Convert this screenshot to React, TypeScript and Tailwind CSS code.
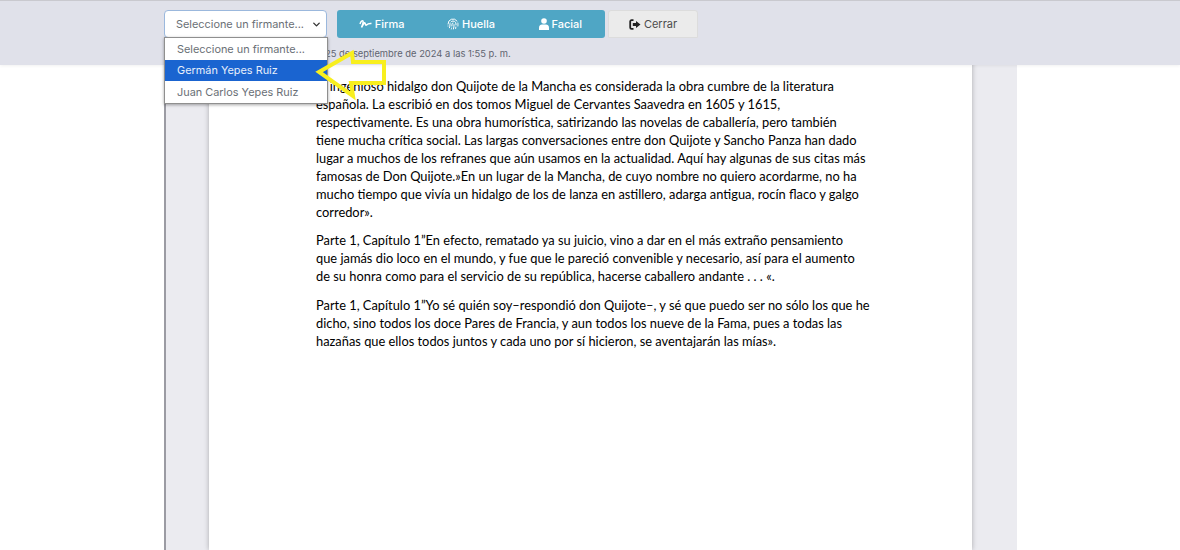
import { ChevronDown, Fingerprint } from "lucide-react";

const poppins = "font-['Inter','Lato',sans-serif]";

const P1 = [
  "El ingenioso hidalgo don Quijote de la Mancha es considerada la obra cumbre de la literatura",
  "española. La escribió en dos tomos Miguel de Cervantes Saavedra en 1605 y 1615,",
  "respectivamente. Es una obra humorística, satirizando las novelas de caballería, pero también",
  "tiene mucha crítica social. Las largas conversaciones entre don Quijote y Sancho Panza han dado",
  "lugar a muchos de los refranes que aún usamos en la actualidad. Aquí hay algunas de sus citas más",
  "famosas de Don Quijote.»En un lugar de la Mancha, de cuyo nombre no quiero acordarme, no ha",
  "mucho tiempo que vivía un hidalgo de los de lanza en astillero, adarga antigua, rocín flaco y galgo",
  "corredor».",
];
const P2 = [
  "Parte 1, Capítulo 1”En efecto, rematado ya su juicio, vino a dar en el más extraño pensamiento",
  "que jamás dio loco en el mundo, y fue que le pareció convenible y necesario, así para el aumento",
  "de su honra como para el servicio de su república, hacerse caballero andante . . . «.",
];
const P3 = [
  "Parte 1, Capítulo 1”Yo sé quién soy–respondió don Quijote–, y sé que puedo ser no sólo los que he",
  "dicho, sino todos los doce Pares de Francia, y aun todos los nueve de la Fama, pues a todas las",
  "hazañas que ellos todos juntos y cada uno por sí hicieron, se aventajarán las mías».",
];

function Para({ lines }: { lines: string[] }) {
  return (
    <p className="mb-[10px] whitespace-nowrap">
      {lines.map((l) => (
        <span key={l} className="block">
          {l}
        </span>
      ))}
    </p>
  );
}

function SignatureIcon() {
  return (
    <svg width="13" height="10" viewBox="0 0 13 10" fill="none" stroke="currentColor" strokeWidth="1.5">
      <path d="M1 5c1-3 2.500-4 3-3S3.500 6 2.500 8.500C4.500 5 5.500 3 6 4s.5 3 1.500 2 2-2 5-1.500" />
    </svg>
  );
}

function PersonIcon() {
  return (
    <svg width="10" height="12" viewBox="0 0 10 12" fill="currentColor">
      <circle cx="5" cy="3" r="2.800" />
      <path d="M0 12V9.500C0 7.500 1.500 6.500 3 6.500h4c1.500 0 3 1 3 3V12Z" />
    </svg>
  );
}

function SignOutIcon() {
  return (
    <svg width="12" height="11" viewBox="0 0 12 11" fill="none">
      <path d="M4.500 1.200H2.500A1.300 1.300 0 0 0 1.200 2.500v6a1.300 1.300 0 0 0 1.300 1.300h2" stroke="#222" strokeWidth="1.800" />
      <path d="M7 2l4.500 3.500L7 9V7H3.800V4H7Z" fill="#222" />
    </svg>
  );
}

export default function App() {
  return (
    <div className="relative h-[550px] w-[1180px] overflow-hidden bg-white">
      {/* documento */}
      <div className="absolute inset-0 pl-[164px]">
        <div className="h-full w-[853px] border-l-2 border-[#9b9ba3] bg-[#ebebf0] pl-[43px]">
          <div className="h-full w-[763px] bg-white pl-[107px] pt-[77px] text-[12.850px] leading-[18.050px] text-black shadow-[0_0_5px_rgba(0,0,0,0.28)] font-['Lato',sans-serif]">
            <Para lines={P1} />
            <Para lines={P2} />
            <Para lines={P3} />
          </div>
        </div>
      </div>

      {/* barra superior */}
      <header className="absolute inset-x-0 top-0 h-[65px] border-t border-[#c9c9cf] bg-[#e0e1ea] pl-[164px] pt-[9px] shadow-[0_1px_3px_rgba(0,0,0,0.06)]">
        <div className={`flex items-start ${poppins}`}>
          <div className="flex h-[28px] w-[163px] items-center justify-between rounded-[4px] border border-[#9bb8dd] bg-white pl-[11px] pr-[4px] text-[10.900px] text-[#6a6f76]">
            <span>Seleccione un firmante...</span>
            <ChevronDown size={11} strokeWidth={3} className="text-[#333]" />
          </div>
          <div className="ml-[10px] flex h-[28px] w-[268px] items-center rounded-[3px] bg-[#4fa6c5] text-[11px] font-medium text-white">
            <span className="flex flex-1 items-center justify-center gap-[3px]">
              <SignatureIcon />
              Firma
            </span>
            <span className="flex flex-1 items-center justify-center gap-[3px]">
              <Fingerprint size={12} />
              Huella
            </span>
            <span className="flex flex-1 items-center justify-center gap-[3px]">
              <PersonIcon />
              Facial
            </span>
          </div>
          <div className="ml-[3px] flex h-[28px] w-[90px] items-center justify-center gap-[3px] rounded-t-[3px] border border-[#dcdcdc] bg-[#ebebeb] text-[11px] text-[#4b4b4b]">
            <SignOutIcon />
            Cerrar
          </div>
        </div>
        <div className={`ml-[161px] mt-[9px] text-[9.400px] text-[#5f6470] ${poppins}`}>
          25 de septiembre de 2024 a las 1:55 p. m.
        </div>
      </header>

      {/* lista del select */}
      <ul className={`absolute left-[164px] top-[37px] w-[164px] border border-[#8f8f8f] bg-white text-[10.900px] shadow-[0_1px_3px_rgba(0,0,0,0.35)] ${poppins}`}>
        <li className="flex h-[22px] items-center pl-[12px] text-[#6a6f76]">Seleccione un firmante...</li>
        <li className="flex h-[21px] items-center bg-[#1a64d0] pl-[12px] text-[#e6eefb]">Germán Yepes Ruiz</li>
        <li className="flex h-[22px] items-center pl-[12px] text-[#6a6f76]">Juan Carlos Yepes Ruiz</li>
      </ul>

      {/* flecha amarilla */}
      <svg className="absolute left-[312px] top-[48px]" width="76" height="52" viewBox="0 0 76 52" fill="none">
        <path
          d="M7 24 L40 5 L41 14 L72 14 L72 35 L39 35 L41 48 Z"
          stroke="#f8ef1e"
          strokeWidth="4"
          strokeLinejoin="miter"
        />
      </svg>
    </div>
  );
}
